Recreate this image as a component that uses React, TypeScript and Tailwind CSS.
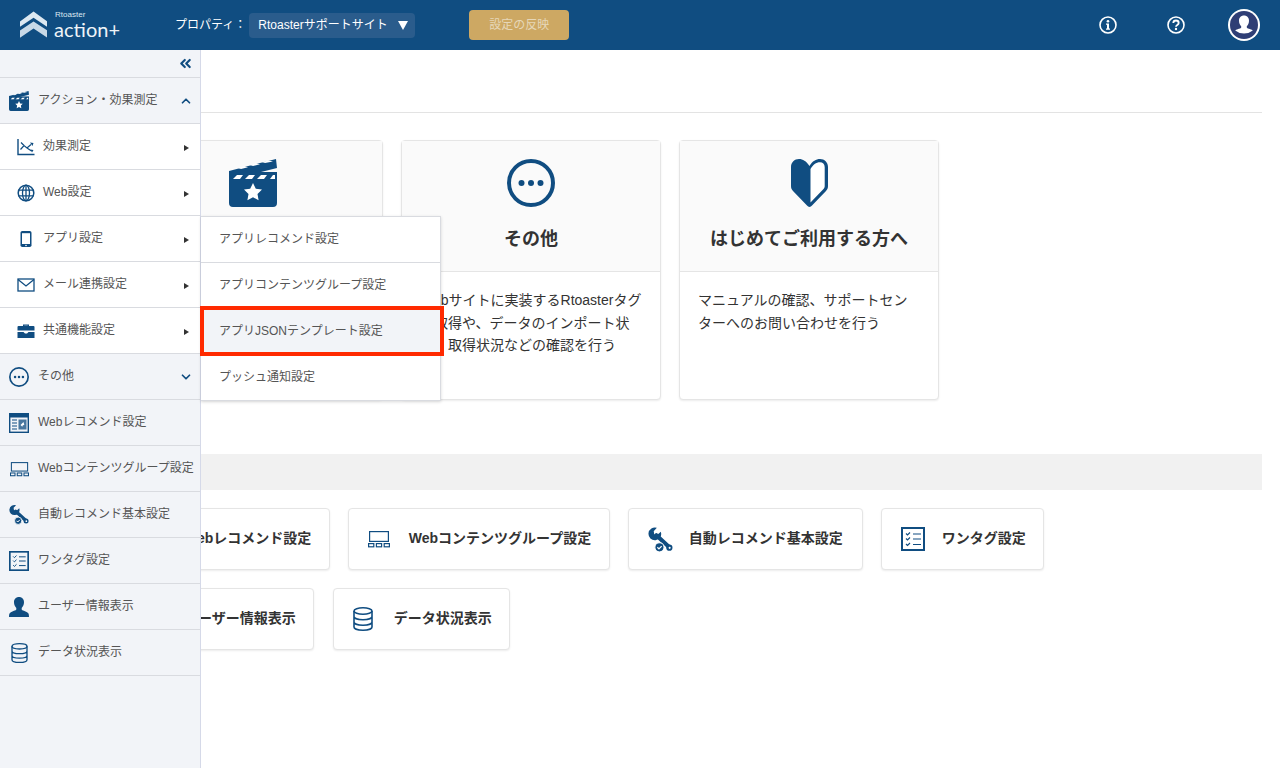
import type { ReactNode } from 'react';
import { ChevronDown, ChevronUp, ChevronsLeft } from 'lucide-react';

const NAVY = '#104d81';

type IconProps = { className?: string };

const ClapperIcon = ({ className }: IconProps) => (
  <svg viewBox="0 0 48 48" className={className}>
    <path d="M0 12 47 0l1 9L4 20H48V44a4 4 0 0 1-4 4H4a4 4 0 0 1-4-4Z" fill={NAVY} />
    <rect x="0" y="13" width="48" height="8" fill={NAVY} />
    <path d="M12 8.600 19 6.800 15 5.800 9 7.400ZM24 5.600 31 3.800 27 2.800 21 4.400ZM36 2.600 44 1 39.500 0 33 1.400Z" fill="#fff" transform="translate(0 1.500)" />
    <path d="M8 16h6l-3 4H4ZM20 16h6l-3 4h-7ZM32 16h6l-3 4h-7ZM44 16h2v4h-5Z" fill="#fff" />
    <path d="m24 24 2.800 5.800 6.200.800-4.500 4.400 1.100 6.300-5.600-3-5.600 3 1.100-6.300-4.500-4.400 6.200-.800Z" fill="#fff" />
  </svg>
);

const DotsIcon = ({ className }: IconProps) => (
  <svg viewBox="0 0 48 48" className={className}>
    <circle cx="24" cy="24" r="22" fill="none" stroke={NAVY} strokeWidth="4" />
    <circle cx="14.500" cy="24" r="3" fill={NAVY} />
    <circle cx="24" cy="24" r="3" fill={NAVY} />
    <circle cx="33.500" cy="24" r="3" fill={NAVY} />
  </svg>
);

const BeginnerIcon = ({ className }: IconProps) => (
  <svg viewBox="0 0 37 48" className={className}>
    <path d="M18.500 7C15 2 12 0 8 0 3.500 0 0 3.500 0 8V27c0 2 .6 3.500 2 5L16 46.500c1.400 1.900 3.600 1.900 5 0L35 32c1.400-1.500 2-3 2-5V8c0-4.500-3.500-8-8-8-4 0-7.500 2-10.500 7Z" fill={NAVY} />
    <path d="M19.500 10c2.500-4 5.500-6.700 9.500-6.700 2.700 0 4.700 2 4.700 4.700V27c0 1.200-.3 2.100-1.200 3L19.500 43.500Z" fill="#fff" />
  </svg>
);

const ChartIcon = ({ className }: IconProps) => (
  <svg viewBox="0 0 18 18" className={className} fill="none" stroke={NAVY}>
    <path d="M1 1V16.500H17.500" strokeWidth="1.400" />
    <path d="M3.500 11.500 7 7.500 10 10 14 6.500M4 4.500 7 7.500M10 10l4.500 3" strokeWidth="1.200" />
    <path d="m13 4.500 3.500.5-1 3ZM13.500 11.500l3 .5-1.500 2.500Z" fill={NAVY} stroke="none" />
  </svg>
);

const GlobeIcon = ({ className }: IconProps) => (
  <svg viewBox="0 0 18 18" className={className} fill="none" stroke={NAVY} strokeWidth="1.300">
    <circle cx="9" cy="9" r="7.800" strokeWidth="1.500" />
    <ellipse cx="9" cy="9" rx="3.500" ry="7.800" />
    <path d="M9 1v16M1.500 6.200h15M1.500 11.800h15" />
  </svg>
);

const PhoneIcon = ({ className }: IconProps) => (
  <svg viewBox="0 0 18 18" className={className}>
    <rect x="3.500" y="1" width="11" height="16" rx="1.800" fill={NAVY} />
    <rect x="5" y="3.200" width="8" height="10.800" fill="#fff" />
    <circle cx="9" cy="15.500" r=".8" fill="#fff" />
  </svg>
);

const MailIcon = ({ className }: IconProps) => (
  <svg viewBox="0 0 18 18" className={className} fill="none" stroke={NAVY} strokeWidth="1.300">
    <rect x="1" y="3" width="16" height="12" />
    <path d="M1 3.500 9 10l8-6.500" />
  </svg>
);

const BriefcaseIcon = ({ className }: IconProps) => (
  <svg viewBox="0 0 18 18" className={className}>
    <path d="M6 4V2.500h6V4h4.500A1 1 0 0 1 17.500 5v3.500H.500V5a1 1 0 0 1 1-1ZM7.300 3.700V4h3.400v-.3Z" fill={NAVY} fillRule="evenodd" />
    <path d="M.500 10H6.500L8 11.500h2L11.500 10H17.500v6H.500Z" fill={NAVY} />
  </svg>
);

const WindowIcon = ({ className }: IconProps) => (
  <svg viewBox="0 0 20 20" className={className} fill="none">
    <rect x=".7" y=".7" width="18.600" height="18.600" stroke={NAVY} strokeWidth="1.400" />
    <rect x="1" y="1" width="18" height="3.500" fill={NAVY} />
    <path d="M3 7h5M3 10h5M3 13h5M3 16h5" stroke={NAVY} strokeWidth="1.200" />
    <rect x="9.500" y="6.500" width="8" height="10" fill={NAVY} opacity=".75" />
    <path d="m11.500 12 3-3 .8 3-1.500.3-.5 1.500Z" fill="#fff" />
  </svg>
);

const GroupIcon = ({ className }: IconProps) => (
  <svg viewBox="0 0 22 18" className={className} fill="none" stroke={NAVY} strokeWidth="1.200">
    <rect x="1.600" y="1.600" width="18.800" height="9.800" />
    <rect x=".6" y="13.600" width="5.200" height="3.200" />
    <rect x="8.400" y="13.600" width="5.200" height="3.200" />
    <rect x="16.200" y="13.600" width="5.200" height="3.200" />
  </svg>
);

const WrenchIcon = ({ className }: IconProps) => (
  <svg viewBox="0 0 24 24" className={className}>
    <path d="M8.500.8 5.500 4 6 7l3 .5 3.300-3A6.100 6.100 0 1 1 8.500.8Z" fill={NAVY} />
    <path d="M8 8 20.500 19.500" stroke={NAVY} strokeWidth="4" strokeLinecap="round" />
    <circle cx="20.500" cy="19.800" r="3" fill={NAVY} />
    <circle cx="20.800" cy="20" r="1" fill="#fff" />
    <circle cx="11" cy="19.500" r="4.400" fill={NAVY} stroke="#fff" strokeWidth="1" />
    <path d="m9 19.500 1.500 1.500 2.600-2.700" fill="none" stroke="#fff" strokeWidth="1.200" />
  </svg>
);

const ChecklistIcon = ({ className }: IconProps) => (
  <svg viewBox="0 0 24 24" className={className} fill="none" stroke={NAVY}>
    <rect x="1" y="1" width="22" height="22" strokeWidth="2" />
    <path d="M12 7h8M12 12h8M12 17.500h8" strokeWidth="1.200" />
    <path d="m5 6.500 1.500 1.500L9 5.500M5 11.500 6.500 13 9 10.500M5 17l1.500 1.500L9 16" strokeWidth="1.200" />
  </svg>
);

const UserIcon = ({ className }: IconProps) => (
  <svg viewBox="0 0 20 20" className={className}>
    <path d="M10 0c3 0 5 2.200 5 5.200 0 2.400-1 4.300-2.300 5.700v1.700c0 1 4 1.500 6.300 3.300.7.600 1 1.600 1 4.100H0c0-2.500.3-3.500 1-4.100 2.300-1.800 6.300-2.300 6.300-3.300v-1.700C6 9.500 5 7.600 5 5.200 5 2.200 7 0 10 0Z" fill={NAVY} />
  </svg>
);

const DatabaseIcon = ({ className }: IconProps) => (
  <svg viewBox="0 0 20 24" className={className} fill="none" stroke={NAVY} strokeWidth="1.600">
    <ellipse cx="10" cy="4" rx="9" ry="3.200" />
    <path d="M1 4v16c0 1.800 4 3.200 9 3.200s9-1.400 9-3.200V4M1 9.500c0 1.800 4 3.200 9 3.200s9-1.400 9-3.200M1 15c0 1.800 4 3.200 9 3.200s9-1.400 9-3.200" />
  </svg>
);

const Arrow = () => (
  <svg viewBox="0 0 5 6" className="absolute right-[11px] top-[21px] h-[6px] w-[5px]">
    <path d="M0 0 5 3 0 6Z" fill="#333" />
  </svg>
);

const subItems: { label: string; icon: ReactNode }[] = [
  { label: '効果測定', icon: <ChartIcon className="h-[18px] w-[18px]" /> },
  { label: 'Web設定', icon: <GlobeIcon className="h-[18px] w-[18px]" /> },
  { label: 'アプリ設定', icon: <PhoneIcon className="h-[18px] w-[18px]" /> },
  { label: 'メール連携設定', icon: <MailIcon className="h-[18px] w-[18px]" /> },
  { label: '共通機能設定', icon: <BriefcaseIcon className="h-[18px] w-[18px]" /> },
];

const lowerItems: { label: string; icon: ReactNode }[] = [
  { label: 'Webレコメンド設定', icon: <WindowIcon className="h-5 w-5" /> },
  { label: 'Webコンテンツグループ設定', icon: <GroupIcon className="h-[16px] w-[19px]" /> },
  { label: '自動レコメンド基本設定', icon: <WrenchIcon className="h-[21px] w-[21px]" /> },
  { label: 'ワンタグ設定', icon: <ChecklistIcon className="h-5 w-5" /> },
  { label: 'ユーザー情報表示', icon: <UserIcon className="h-5 w-5" /> },
  { label: 'データ状況表示', icon: <DatabaseIcon className="h-[20px] w-[17px]" /> },
];

const flyoutItems = ['アプリレコメンド設定', 'アプリコンテンツグループ設定', 'アプリJSONテンプレート設定', 'プッシュ通知設定'];

const TopRow = ({ label, icon, right }: { label: string; icon: ReactNode; right?: ReactNode }) => (
  <div className="flex h-[46px] items-center border-b border-[#d9dbe0] pl-[9px] pr-[7px] text-[12px] text-[#555]">
    <span className="flex w-5 shrink-0 justify-center">{icon}</span>
    <span className="mb-[2px] ml-[9px] flex-1 whitespace-nowrap">{label}</span>
    {right}
  </div>
);

const Flyout = () => (
  <div className="absolute left-[201px] top-0 z-30 w-[240px] border-y border-r border-[#d9dbe0] bg-white shadow-[0_1px_3px_rgba(0,0,0,0.15)]">
    {flyoutItems.map((item, i) => (
      <div
        key={item}
        className={`relative flex items-center pb-[2px] pl-[18px] text-[12px] text-[#555] ${i === 3 ? 'h-[45px]' : 'h-[46px]'} ${i === 2 ? 'bg-[#f2f4f8]' : ''} ${i < 2 ? 'border-b border-[#d9dbe0]' : ''}`}
      >
        {item}
        {i === 2 && <div className="absolute -bottom-px -left-px -right-1 -top-[3px] border-4 border-[#ff2a00]" />}
      </div>
    ))}
  </div>
);

const Sidebar = () => (
  <aside className="absolute bottom-0 left-0 top-[50px] z-20 w-[201px] border-r border-[#d5d9e8] bg-[#f2f4f8]">
    <div className="flex h-[28px] items-center justify-end border-b border-[#d9dbe0] pr-[6px]">
      <ChevronsLeft className="h-[17px] w-[17px]" color={NAVY} strokeWidth={3} />
    </div>
    <TopRow
      label="アクション・効果測定"
      icon={<ClapperIcon className="h-5 w-5" />}
      right={<ChevronUp className="h-[14px] w-[14px]" color={NAVY} strokeWidth={3} />}
    />
    {subItems.map((item) => (
      <div key={item.label} className="relative flex h-[46px] items-center border-b border-[#d9dbe0] bg-white pl-[17px] text-[12px] text-[#555]">
        <span className="flex w-[18px] justify-center">{item.icon}</span>
        <span className="mb-[2px] ml-2 whitespace-nowrap">{item.label}</span>
        <Arrow />
        {item.label === 'アプリ設定' && <Flyout />}
      </div>
    ))}
    <TopRow
      label="その他"
      icon={<DotsIcon className="h-5 w-5" />}
      right={<ChevronDown className="h-[14px] w-[14px]" color={NAVY} strokeWidth={3} />}
    />
    {lowerItems.map((item) => (
      <TopRow key={item.label} label={item.label} icon={item.icon} />
    ))}
  </aside>
);

const Header = () => (
  <header className="flex h-[50px] items-center bg-[#104d81] text-white">
    <div className="ml-5 flex w-[100px] items-center">
      <svg viewBox="0 0 30 30" className="h-[30px] w-[30px]">
        <path d="M15 0 30 11v6L15 7 0 17v-6Z" fill="#dce8f1" />
        <path d="M15 11 30 21v8L15 19 0 29v-8Z" fill="#c8d9e7" />
      </svg>
      <div className="ml-[7px] flex flex-col">
        <span className="ml-px text-[8px] leading-[8px] text-[#dce8f1]">Rtoaster</span>
        <span className="font-['Lato',sans-serif] text-[20px] leading-[20px] text-[#eef4f8]">action+</span>
      </div>
    </div>
    <span className="ml-[55px] whitespace-nowrap text-[12px]">プロパティ：</span>
    <div className="ml-[3px] flex h-[25px] w-[166px] items-center rounded bg-[#2a5c8c] pl-[9px] text-[12px]">
      Rtoasterサポートサイト
      <svg viewBox="0 0 10 9" className="ml-[10px] h-[9px] w-[10px]">
        <path d="M0 0h10L5 9Z" fill="#fff" />
      </svg>
    </div>
    <div className="ml-[54px] flex h-[30px] w-[100px] items-center justify-center rounded-sm bg-[#cda863] text-[12px] text-[#e6d7b8]">
      設定の反映
    </div>
    <div className="ml-auto flex items-center">
      <svg viewBox="0 0 18 18" className="h-[18px] w-[18px]">
        <circle cx="9" cy="9" r="8" fill="none" stroke="#fff" strokeWidth="1.600" />
        <circle cx="9" cy="5.200" r="1.300" fill="#fff" />
        <path d="M7 7.500h3v5h1v1.300H7v-1.300h1V8.800H7Z" fill="#fff" />
      </svg>
      <svg viewBox="0 0 18 18" className="ml-[50px] h-[18px] w-[18px]">
        <circle cx="9" cy="9" r="8" fill="none" stroke="#fff" strokeWidth="1.600" />
        <path d="M6.300 7C6.300 5.500 7.500 4.500 9 4.500s2.700 1 2.700 2.400c0 2-2.700 2-2.700 3.800" fill="none" stroke="#fff" strokeWidth="1.800" />
        <circle cx="9" cy="13" r="1.200" fill="#fff" />
      </svg>
      <svg viewBox="0 0 32 32" className="ml-[43px] mr-5 h-8 w-8">
        <circle cx="16" cy="16" r="16" fill="#fff" />
        <circle cx="16" cy="16" r="14" fill="#2f3e75" />
        <path d="M16 6.500c3 0 5 2.200 5 5.200 0 2.300-1 4.200-2.200 5.500v1.300c0 1 3.700 1.300 6 2.900a14 14 0 0 1-17.600 0c2.300-1.600 6-1.900 6-2.900v-1.300C12 15.900 11 14 11 11.700c0-3 2-5.200 5-5.200Z" fill="#fff" />
      </svg>
    </div>
  </header>
);

const Card = ({ title, icon, children }: { title?: string; icon: ReactNode; children?: ReactNode }) => (
  <div className="h-[260px] w-[260px] rounded-sm border border-[#e5e5e5] bg-white shadow-[0_1px_2px_rgba(0,0,0,0.08)]">
    <div className="flex h-[131px] flex-col items-center border-b border-[#e5e5e5] bg-[#fafafa] pt-[18px]">
      <div className="h-12">{icon}</div>
      {title && <h2 className="mt-[19px] whitespace-nowrap text-[18px] font-bold leading-[26px] text-[#333]">{title}</h2>}
    </div>
    <p className="whitespace-nowrap pl-[18px] pt-[17px] text-[14px] leading-[22.5px] text-[#333]">{children}</p>
  </div>
);

const ActionButton = ({ label, icon, wide }: { label: string; icon: ReactNode; wide?: boolean }) => (
  <div className={`flex h-[62px] items-center rounded-sm border border-[#e5e5e5] bg-white pl-[19px] shadow-[0_1px_2px_rgba(0,0,0,0.08)] ${wide ? 'pr-[19px]' : 'pr-[17.5px]'}`}>
    <span className="flex w-[41px] items-center">{icon}</span>
    <span className="mb-[2px] whitespace-nowrap text-[14px] font-bold text-[#333]">{label}</span>
  </div>
);

export default function App() {
  return (
    <div className="relative h-[768px] w-full overflow-hidden bg-white font-['Liberation_Sans','Noto_Sans_CJK_JP',sans-serif]">
      <Header />
      <Sidebar />
      <main className="pl-[123px] pr-[18px]">
        <div className="h-[63px] border-b border-[#e3e3e3]" />
        <div className="mt-[27px] flex gap-[18px]">
          <Card icon={<ClapperIcon className="h-12 w-12" />} />
          <Card title="その他" icon={<DotsIcon className="h-12 w-12" />}>
            Webサイトに実装するRtoasterタグ<br />
            の取得や、データのインポート状<br />
            況、取得状況などの確認を行う
          </Card>
          <Card title="はじめてご利用する方へ" icon={<BeginnerIcon className="h-12 w-[37px]" />}>
            マニュアルの確認、サポートセン<br />
            ターへのお問い合わせを行う
          </Card>
        </div>
        <div className="mt-[54px] h-9 bg-[#f1f1f1]" />
        <div className="mt-[18px] flex gap-[18px]">
          <ActionButton label="Webレコメンド設定" icon={<WindowIcon className="h-6 w-6" />} />
          <ActionButton label="Webコンテンツグループ設定" icon={<GroupIcon className="h-[18px] w-[22px]" />} />
          <ActionButton label="自動レコメンド基本設定" icon={<WrenchIcon className="h-[25px] w-[25px]" />} wide />
          <ActionButton label="ワンタグ設定" icon={<ChecklistIcon className="h-6 w-6" />} />
        </div>
        <div className="mt-[18px] flex gap-[18.500px]">
          <ActionButton label="ユーザー情報表示" icon={<UserIcon className="h-6 w-6" />} />
          <ActionButton label="データ状況表示" icon={<DatabaseIcon className="h-6 w-5" />} />
        </div>
      </main>
    </div>
  );
}
